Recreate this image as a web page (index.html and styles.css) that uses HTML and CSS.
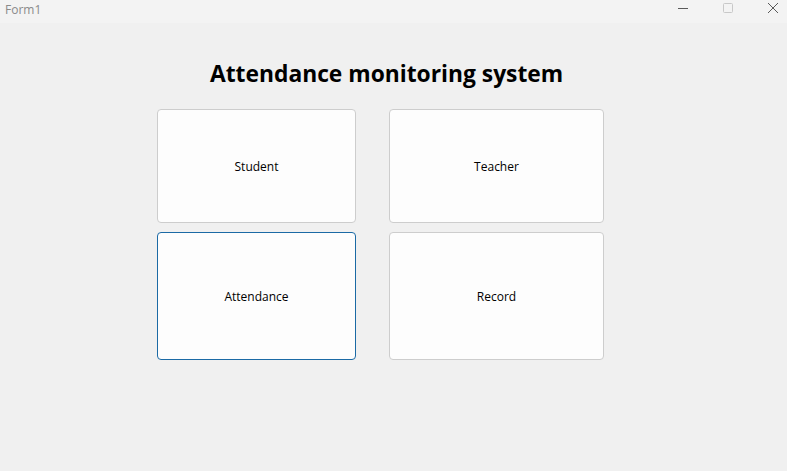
FILE: index.html
```html
<!DOCTYPE html>
<html>
<head>
<meta charset="utf-8">
<link rel="stylesheet" href="styles.css">
</head>
<body>
<div class="window">
  <div class="titlebar">
    <span class="title">Form1</span>
    <div class="controls">
      <span class="ctl">
        <svg width="12" height="12" viewBox="0 0 12 12"><path d="M1 6.5h10" stroke="#5a5a5a" stroke-width="1"/></svg>
      </span>
      <span class="ctl">
        <svg width="12" height="12" viewBox="0 0 12 12"><rect x="1.5" y="1.5" width="9" height="9" rx="1" fill="none" stroke="#c8c8c8" stroke-width="1"/></svg>
      </span>
      <span class="ctl">
        <svg width="12" height="12" viewBox="0 0 12 12"><path d="M1 1L11 11M11 1L1 11" stroke="#5a5a5a" stroke-width="1"/></svg>
      </span>
    </div>
  </div>
  <div class="content">
    <h1 class="heading">Attendance monitoring system</h1>
    <div class="grid">
      <button class="btn">Student</button>
      <button class="btn">Teacher</button>
      <button class="btn focus">Attendance</button>
      <button class="btn">Record</button>
    </div>
  </div>
</div>
</body>
</html>
```
FILE: styles.css
```css
html, body {
  margin: 0;
  padding: 0;
  background: #f0f0f0;
  font-family: "Open Sans", "Noto Sans", sans-serif;
}
.window {
  width: 787px;
  height: 471px;
  display: flex;
  flex-direction: column;
}
.titlebar {
  height: 23px;
  background: #f3f3f3;
  display: flex;
  align-items: center;
  justify-content: space-between;
}
.title {
  font-size: 12px;
  color: #8a8a8a;
  padding-left: 5px;
  margin-top: -5px;
}
.controls {
  display: flex;
  align-self: flex-start;
  margin-top: 2px;
  gap: 31px;
  padding-right: 7px;
}
.ctl {
  width: 14px;
  height: 12px;
  display: flex;
  align-items: center;
  justify-content: center;
}
.content {
  flex: 1;
  padding-top: 36px;
}
.heading {
  margin: 0 0 20px 210px;
  font-size: 22.8px;
  font-weight: 700;
  line-height: 30px;
  color: #000;
  letter-spacing: 0;
}
.grid {
  margin-left: 157px;
  display: grid;
  grid-template-columns: 199px 215px;
  grid-template-rows: 114px 128px;
  column-gap: 33px;
  row-gap: 9px;
}
.btn {
  background: #fdfdfd;
  border: 1px solid #cdcdcd;
  border-radius: 4px;
  font-family: "Open Sans", "Noto Sans", sans-serif;
  font-size: 12px;
  color: #000;
  padding: 0;
  margin: 0;
}
.btn.focus {
  border-color: #1b6aa5;
}
```
